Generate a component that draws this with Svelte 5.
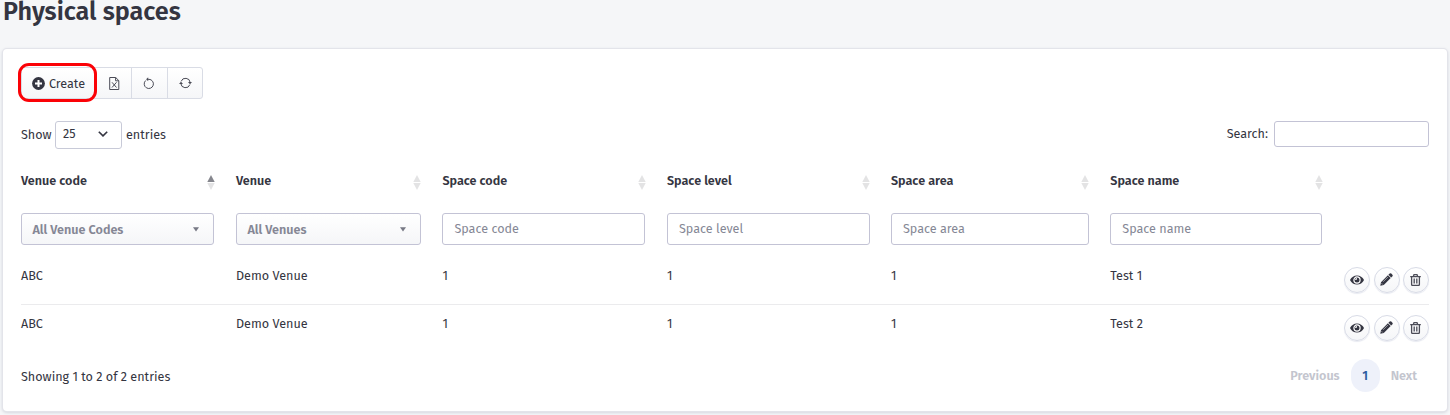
<script>
  const columns = [
    { label: 'Venue code', select: 'All Venue Codes', asc: true },
    { label: 'Venue', select: 'All Venues' },
    { label: 'Space code' },
    { label: 'Space level' },
    { label: 'Space area' },
    { label: 'Space name' }
  ];
  const rows = [
    ['ABC', 'Demo Venue', '1', '1', '1', 'Test 1'],
    ['ABC', 'Demo Venue', '1', '1', '1', 'Test 2']
  ];
</script>

<h1>Physical spaces</h1>
<main class="card">
  <div class="toolbar">
    <button class="create">
      <svg width="13" height="13" viewBox="0 0 13 13"><circle cx="6.5" cy="6.5" r="6.4" fill="#343541" /><path d="M6.500 3v7M3 6.500h7" stroke="#fff" stroke-width="2" /></svg>
      <span>Create</span>
      <i class="ring"></i>
    </button>
    <button class="tool" aria-label="Export">
      <svg width="11" height="13" viewBox="0 0 11 13" fill="none" stroke="#4b4c57" stroke-width="1"><path d="M.7.5h6l3.100 3.100v8.900H.7zM6.600.5v3.300h3.200M3 5.300l4.500 5.200M7.500 5.300L3 10.500" /></svg>
    </button>
    <button class="tool wide" aria-label="Reset">
      <svg width="12" height="13" viewBox="0 0 12 13" fill="none" stroke="#4b4c57" stroke-width="1"><path d="M2.700 3.500A4.600 4.600 0 1 0 6 2.300H4.800" /><path d="M5.200 .3L3.100 2.300 5.200 4.300z" fill="#4b4c57" stroke="none" /></svg>
    </button>
    <button class="tool" aria-label="Refresh">
      <svg width="13" height="12" viewBox="0 0 13 12" fill="none" stroke="#4b4c57" stroke-width="1"><path d="M2.100 4.400A4.700 4.700 0 0 1 11.200 5.500M10.900 7.600A4.700 4.700 0 0 1 1.800 6.500" /><path d="M9 5.100h4L11 7.300zM0 6.900H4L2 4.700z" fill="#4b4c57" stroke="none" /></svg>
    </button>
  </div>

  <div class="controls">
    <div class="length">
      <span>Show</span>
      <div class="count"><span>25</span><svg width="10" height="6" viewBox="0 0 10 6" fill="none" stroke="#343541" stroke-width="1.600"><path d="M.8.7L5 4.900 9.200.7" /></svg></div>
      <span>entries</span>
    </div>
    <label class="search"><span>Search:</span><input type="text" /></label>
  </div>

  <div class="grid head">
    {#each columns as c}
      <div class="th">
        <span>{c.label}</span>
        <svg width="8" height="15" viewBox="0 0 8 15"><path d="M4 0l3.700 7H.3z" fill={c.asc ? '#85868d' : '#e3e3e4'} /><path d="M.3 8h7.400L4 15z" fill="#e3e3e4" /></svg>
      </div>
    {/each}
  </div>
  <div class="grid filters">
    {#each columns as c}
      <div class="filter">
        {#if c.select}
          <div class="box select"><span>{c.select}</span><svg width="6" height="5" viewBox="0 0 6 5"><path d="M0 .3h6L3 4.600z" fill="#777985" /></svg></div>
        {:else}
          <input class="box" type="text" placeholder={c.label} />
        {/if}
      </div>
    {/each}
  </div>
  {#each rows as row}
    <div class="grid row">
      {#each row as cell}<span>{cell}</span>{/each}
      <div class="actions">
        <button aria-label="View"><svg width="14" height="10" viewBox="0 0 14 10"><path d="M0 5C1.500 2 4 .4 7 .4S12.500 2 14 5C12.500 8 10 9.600 7 9.600S1.500 8 0 5z" fill="#343541" /><circle cx="7" cy="5" r="3.100" fill="#343541" stroke="#fff" stroke-width="1.200" /><path d="M5.700 5A1.400 1.400 0 0 1 7 3.700" fill="none" stroke="#fff" stroke-width="1.300" /></svg></button>
        <button aria-label="Edit"><svg width="13" height="13" viewBox="0 0 13 13" fill="#343541"><path d="M.3 12.700L1 9.200 7.900 2.300 10.700 5.100 3.800 12zM8.400 1.800L9.700.5Q10.500-.1 11.300.6L12.400 1.700Q13.100 2.500 12.500 3.300L11.200 4.600z" /><path d="M3.100 8.800L8 3.900M1.500 10.200l1.300 1.300" stroke="#fff" stroke-width=".5" /></svg></button>
        <button aria-label="Delete"><svg width="11" height="12" viewBox="0 0 11 12" fill="none" stroke="#4b4c57" stroke-width="1.300"><path d="M.2 2.600h10.600M3.300 2.500L4 .7h3l.7 1.800M1.600 2.600v8q0 .8.800.8h6.200q.8 0 .8-.8v-8M4.200 4.500v5.100M6.800 4.500v5.100" /></svg></button>
      </div>
    </div>
  {/each}
  <div class="footer">
    <span>Showing 1 to 2 of 2 entries</span>
    <nav><span>Previous</span><b>1</b><span>Next</span></nav>
  </div>
</main>

<style>
  :global(body) { background: #f5f6f8; height: 415px; overflow: hidden; }
  :global(#app) { font: 12.6px/18px "Fira Sans", "Noto Sans", sans-serif; color: #343541; }
  h1 { margin: 0; padding: 0 3px; height: 49px; box-sizing: border-box; font-size: 25.2px; line-height: 24px; font-weight: 600; }
  .card { box-sizing: border-box; margin: 0 3px; width: 1444px; height: 362px; padding: 18px 18px 0; background: #fff; border-radius: 4px; box-shadow: 0 0 0 1px #e3e4ea, 0 1px 3px 1px #d5d7df; }
  button { font: inherit; color: inherit; margin: 0; padding: 0; display: flex; align-items: center; justify-content: center; }
  .toolbar { display: flex; width: 182px; height: 32px; box-sizing: border-box; border: 1px solid #d9dce5; border-radius: 3px; background: linear-gradient(#fff, #f5f6f8); }
  .toolbar button { box-sizing: border-box; border: 0; background: none; }
  .toolbar .create { position: relative; width: 74px; gap: 4px; padding: 1px 1px 0 0; }
  .ring { position: absolute; left: -4px; top: -5px; width: 73px; height: 33px; border: 3px solid #fb0207; border-radius: 11px; }
  .toolbar .tool { width: 35px; border-left: 1px solid #d9dce5; }
  .toolbar .wide { width: 36px; padding-right: 1px; }
  .toolbar .tool:nth-child(2) { border-left-color: transparent; }
  .controls { display: flex; justify-content: space-between; height: 28px; margin-top: 22px; }
  .length, .search { display: flex; align-items: center; height: 28px; }
  .length { gap: 4px; }
  .length > span:first-child { width: 30px; }
  .count { width: 67px; height: 28px; box-sizing: border-box; border: 1px solid #c8cad8; border-radius: 3px; display: flex; align-items: center; justify-content: space-between; padding: 0 13px 2px 7px; }
  .search { height: 26px; gap: 6px; }
  .search input { width: 155px; height: 26px; box-sizing: border-box; border: 1px solid #c3c3d5; border-radius: 3px; padding: 0 8px; }
  .grid { display: grid; grid-template-columns: 215px 206.400px 224.600px 224px 219.300px 233.700px 1fr; }
  .head { height: 64px; padding-top: 23px; box-sizing: border-box; }
  .th { display: flex; justify-content: space-between; padding-right: 21px; font-weight: 600; }
  .th svg { margin-top: 3px; }
  .filter { padding-right: 22px; }
  .filter:nth-child(2), .filter:nth-child(4), .filter:nth-child(5) { padding-right: 21px; }
  .box { box-sizing: border-box; width: 100%; height: 32px; border: 1px solid #c3c3d5; border-radius: 3px; padding: 0 11px 2px; font: inherit; display: block; background: #fff; }
  .box::placeholder { color: #858795; opacity: 1; }
  .select { display: flex; align-items: center; justify-content: space-between; padding: 1px 14px 0 10.400px; font-weight: 600; color: #858795; background: linear-gradient(#fff, #f5f6f8); }
  .row { height: 48px; box-sizing: border-box; padding-top: 10px; }
  .filters + .row { height: 60px; padding-top: 22px; border-bottom: 1px solid #ebebed; }
  .actions { display: flex; justify-content: flex-end; gap: 3.500px; }
  .actions button { box-sizing: border-box; width: 26px; height: 26px; border: 1px solid #d8dbe6; border-radius: 50%; background: linear-gradient(#fff, #f5f6f8); box-shadow: 0 1px 1px #e8eaf1; }
  .actions button svg { margin: 0 1px 1px 0; }
  .footer { display: flex; justify-content: space-between; align-items: center; height: 33px; margin-top: 6px; }
  .footer > span { padding-top: 2px; }
  nav { display: flex; align-items: center; font-weight: 600; color: #c3c5ce; padding-right: 12px; gap: 11px; }
  nav b { width: 29px; height: 33px; line-height: 33px; border-radius: 15px; text-align: center; background: #eef1fa; color: #2c5da0; font-weight: 600; }
</style>
